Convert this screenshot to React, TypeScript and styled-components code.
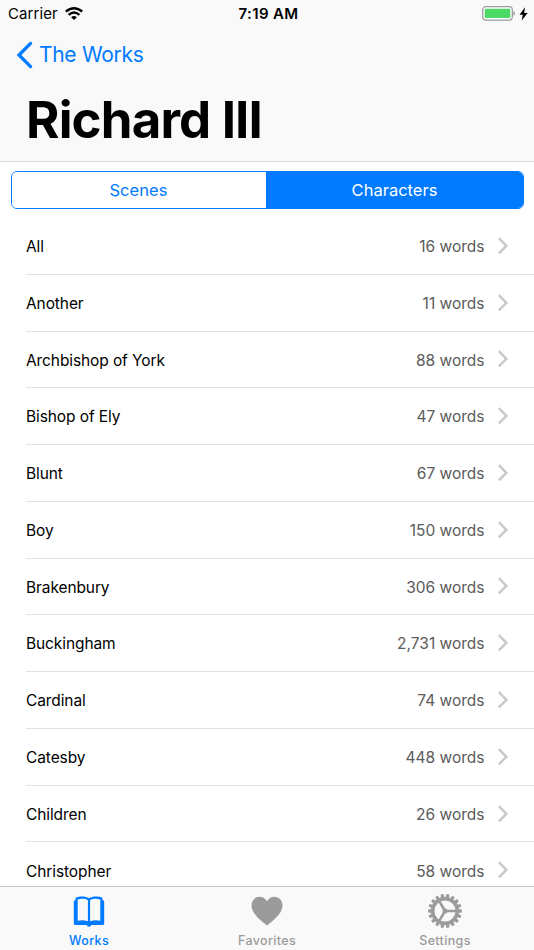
import React from "react";
import styled, { createGlobalStyle } from "styled-components";

const BLUE = "#007aff";
const GRAY = "#9b9b9b";

const GlobalStyle = createGlobalStyle`
  * { box-sizing: border-box; }
  body { margin: 0; background: #fff; }
`;

const Screen = styled.div`
  width: 534px;
  height: 950px;
  display: flex;
  flex-direction: column;
  overflow: hidden;
  background: #fff;
  color: #000;
  font-family: Inter, "Liberation Sans", sans-serif;
`;

const Header = styled.header`
  flex: none;
  height: 162px;
  background: #f9f9f9;
  border-bottom: 1px solid #d8d8d8;
`;

const StatusBar = styled.div`
  height: 28px;
  display: grid;
  grid-template-columns: 1fr auto 1fr;
  align-items: center;
  padding: 0 6px 0 8px;
  font-size: 15px;
  line-height: 28px;
`;

const Carrier = styled.div`
  display: flex;
  align-items: center;
  gap: 7px;
  letter-spacing: 0.1px;
`;

const Clock = styled.div`
  font-weight: 600;
  letter-spacing: 0.35px;
  padding-left: 1px;
`;

const Power = styled.div`
  display: flex;
  align-items: center;
  justify-content: flex-end;
  gap: 4px;
  margin-top: -1px;
`;

const BackButton = styled.a`
  height: 53px;
  display: flex;
  align-items: center;
  gap: 6px;
  padding-left: 16px;
  color: ${BLUE};
  font-size: 21px;
  letter-spacing: -0.3px;
`;

const Title = styled.h1`
  margin: 6px 0 0 26px;
  font-size: 51px;
  line-height: 66px;
  font-weight: 700;
  letter-spacing: -0.85px;
`;

const Segments = styled.div`
  flex: none;
  display: flex;
  height: 38px;
  margin: 9px 10.5px 9px;
  border: 1.5px solid ${BLUE};
  border-radius: 6px;
  overflow: hidden;
`;

const Segment = styled.div<{ $active?: boolean }>`
  flex: ${(p) => (p.$active ? "0 0 257px" : 1)};
  display: flex;
  align-items: center;
  justify-content: center;
  font-size: 16.5px;
  letter-spacing: ${(p) => (p.$active ? "0px" : "0.05px")};
  padding-left: ${(p) => (p.$active ? "1px" : "0")};
  background: ${(p) => (p.$active ? BLUE : "#fff")};
  color: ${(p) => (p.$active ? "#fff" : BLUE)};
`;

const List = styled.div`
  flex: 1;
  min-height: 0;
  overflow: hidden;
`;

const Row = styled.div`
  height: 56.78px;
  margin-left: 26px;
  padding-right: 26px;
  display: flex;
  align-items: center;
  border-bottom: 1px solid #e1e1e3;
  font-size: 15.5px;
  letter-spacing: -0.1px;
`;

const Name = styled.span`
  flex: 1;
  padding-top: 1.5px;
`;

const Words = styled.span`
  color: #5b5b5b;
  padding-top: 1.5px;
  margin-right: 13.5px;
  letter-spacing: 0;
`;

const TabBar = styled.nav`
  flex: none;
  height: 64px;
  display: flex;
  background: #f9f9f9;
  border-top: 1px solid #c8c8c8;
`;

const Tab = styled.div<{ $active?: boolean }>`
  flex: 1;
  display: flex;
  flex-direction: column;
  align-items: center;
  padding-top: 7px;
  color: ${(p) => (p.$active ? BLUE : GRAY)};
  font-size: 12.5px;
  font-weight: 500;
  letter-spacing: 0.35px;
`;

const TabIcon = styled.span`
  display: flex;
  height: 34px;
`;

const TabLabel = styled.span`
  margin-top: 4px;
  line-height: 18px;
`;

const Wifi = () => (
  <svg width="18" height="14" viewBox="0 0 18 14" fill="none" stroke="#000" strokeWidth="2.4">
    <path d="M.8 4.7Q9-2.2 17.2 4.7" />
    <path d="M3.6 7.8Q9 3.2 14.4 7.8" />
    <path d="M6.1 10.2Q9 7.8 11.9 10.2L9 13.1Z" fill="#000" stroke="none" />
  </svg>
);

const Battery = () => (
  <svg width="33" height="15" viewBox="0 0 33 15">
    <rect x=".7" y=".7" width="29.6" height="13.4" rx="3" fill="#fff" stroke="#9b9b9b" strokeWidth="1.2" />
    <rect x="2.7" y="2.7" width="25.6" height="9.4" rx="1.2" fill="#4cd964" />
    <path d="M31.4 5q1.6.7 1.6 2.4T31.4 9.8Z" fill="#9b9b9b" />
  </svg>
);

const Bolt = () => (
  <svg width="9" height="14" viewBox="0 0 9 14">
    <path d="M6 .3.5 7.8h3.3L2.7 13.6 8.6 5.9H5.2Z" />
  </svg>
);

const BackChevron = () => (
  <svg width="17" height="28" viewBox="0 0 17 28" fill="none" stroke={BLUE} strokeWidth="3.3" strokeLinecap="round">
    <path d="M14.6 2.4 3 14l11.6 11.6" />
  </svg>
);

const RowChevron = () => (
  <svg width="10" height="18" viewBox="0 0 10 18" fill="none" stroke="#c7c7cc" strokeWidth="2.4">
    <path d="M.8 1.2 8.4 8.8.8 16.4" />
  </svg>
);

const BookIcon = () => (
  <svg width="32" height="34" viewBox="0 0 32 34">
    <path
      fill="currentColor"
      fillRule="evenodd"
      d="M16 4.2C12.6 2 6.5 2 2.6 3.8V6Q.8 6 .8 7.8V29.5Q.8 31 2.6 31H13.6Q14 32.7 16 32.7T18.4 31H29.4Q31.2 31 31.2 29.5V7.8Q31.2 6 29.4 6V3.8C25.5 2 19.4 2 16 4.2ZM4.7 5.6C8.2 4.5 12 4.6 14.9 6.2V27.3C11.8 26 8 26 4.7 26.8ZM27.3 5.6C23.8 4.5 20 4.6 17.1 6.2V27.3C20.2 26 24 26 27.3 26.8Z"
    />
  </svg>
);

const HeartIcon = () => (
  <svg width="32" height="32" viewBox="0 0 32 32" fill="currentColor">
    <path d="M16 31.5C12 28 .5 20.5.5 11.5.5 6.4 4.1 2.8 8.5 2.8c3.2 0 6.1 1.8 7.5 4.5 1.4-2.7 4.3-4.5 7.5-4.5 4.4 0 8 3.6 8 8.7 0 9-11.5 16.5-15.5 20Z" />
  </svg>
);

const teeth = Array.from({ length: 18 }, (_, i) => i * 20 + 10);

const GearIcon = () => (
  <svg width="34" height="34" viewBox="-17 -17 34 34" fill="none" stroke="currentColor">
    <circle r="12.3" strokeWidth="3.5" />
    {teeth.map((a) => (
      <path key={a} d="M-1.9-13.4-1.4-16.9H1.4L1.9-13.4Z" fill="currentColor" stroke="none" transform={`rotate(${a})`} />
    ))}
    <path d="M0 0H12M0 0-6-10.4M0 0-6 10.4" strokeWidth="2.6" />
    <circle r="2.5" fill="currentColor" stroke="none" />
  </svg>
);

const characters: [string, string][] = [
  ["All", "16"],
  ["Another", "11"],
  ["Archbishop of York", "88"],
  ["Bishop of Ely", "47"],
  ["Blunt", "67"],
  ["Boy", "150"],
  ["Brakenbury", "306"],
  ["Buckingham", "2,731"],
  ["Cardinal", "74"],
  ["Catesby", "448"],
  ["Children", "26"],
  ["Christopher", "58"],
];

export default function App() {
  return (
    <Screen>
      <GlobalStyle />
      <Header>
        <StatusBar>
          <Carrier>Carrier <Wifi /></Carrier>
          <Clock>7:19 AM</Clock>
          <Power><Battery /><Bolt /></Power>
        </StatusBar>
        <BackButton><BackChevron />The Works</BackButton>
        <Title>Richard III</Title>
      </Header>
      <Segments>
        <Segment>Scenes</Segment>
        <Segment $active>Characters</Segment>
      </Segments>
      <List>
        {characters.map(([name, count]) => (
          <Row key={name}>
            <Name>{name}</Name>
            <Words>{count} words</Words>
            <RowChevron />
          </Row>
        ))}
      </List>
      <TabBar>
        <Tab $active><TabIcon><BookIcon /></TabIcon><TabLabel>Works</TabLabel></Tab>
        <Tab><TabIcon><HeartIcon /></TabIcon><TabLabel>Favorites</TabLabel></Tab>
        <Tab><TabIcon><GearIcon /></TabIcon><TabLabel>Settings</TabLabel></Tab>
      </TabBar>
    </Screen>
  );
}
